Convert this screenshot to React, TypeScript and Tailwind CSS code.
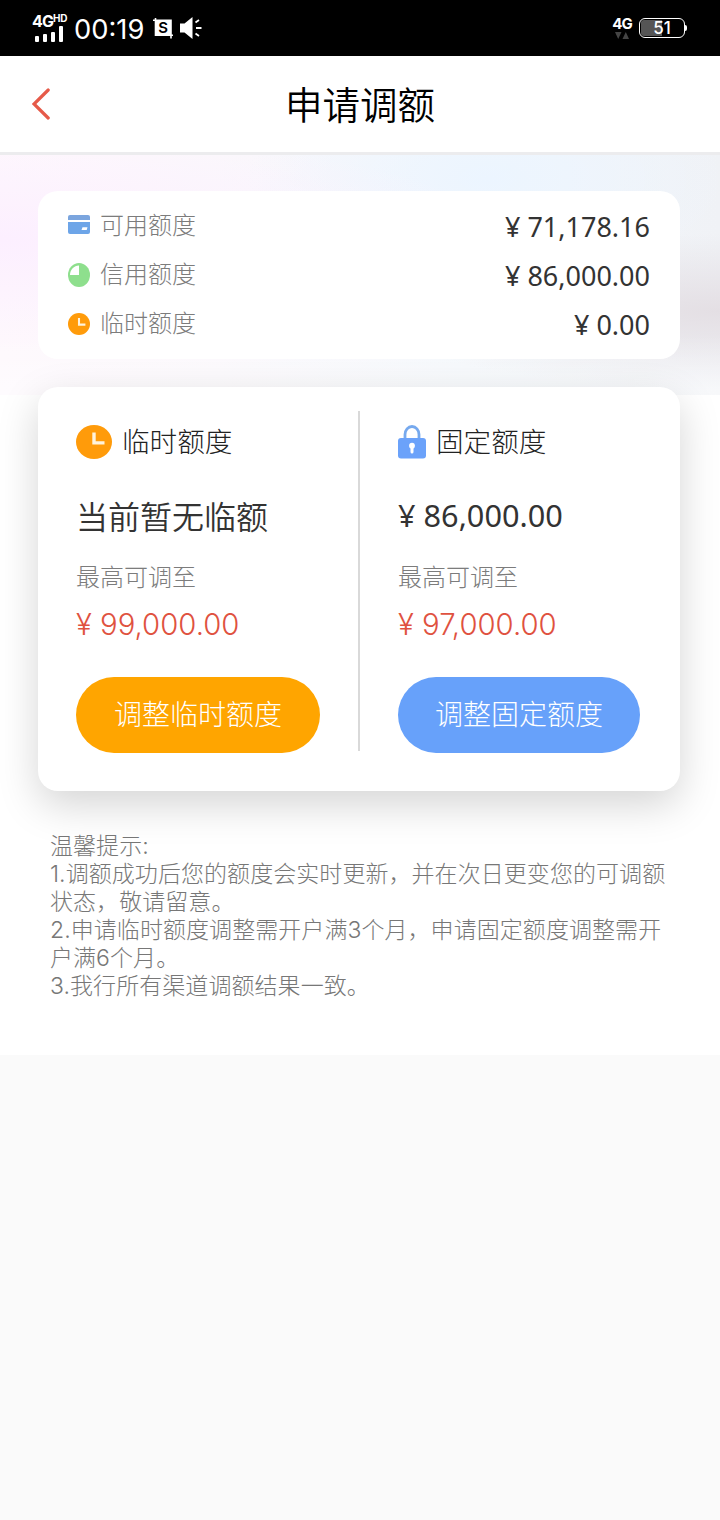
import React from 'react';

interface IconProps {
  className?: string;
}

const BankCardIcon: React.FC<IconProps> = ({ className }) => (
  <svg viewBox="0 0 22 19" className={className}>
    <path d="M2 0h18a2 2 0 0 1 2 2v3H0V2a2 2 0 0 1 2-2z" fill="#7ba5de" />
    <path d="M0 7h22v10a2 2 0 0 1-2 2H2a2 2 0 0 1-2-2z" fill="#6da5e8" />
    <path d="M14.5 12.3h5l-.8 2.6h-5.2z" fill="#fff" />
  </svg>
);

const PieIcon: React.FC<IconProps> = ({ className }) => (
  <svg viewBox="0 0 22 24" className={className}>
    <ellipse cx="11" cy="12" rx="11" ry="12" fill="#8edf8d" />
    <path d="M11 2.4V12H2C2 6.5 6 2.6 11 2.4z" fill="#fff" />
  </svg>
);

const ClockIcon: React.FC<IconProps> = ({ className }) => (
  <svg viewBox="0 0 36 36" preserveAspectRatio="none" className={className}>
    <circle cx="18" cy="18" r="18" fill="#ff9b0a" />
    <path d="M18 8v11h10.5" fill="none" stroke="#fff3dc" strokeWidth="3.4" />
  </svg>
);

const LockIcon: React.FC<IconProps> = ({ className }) => (
  <svg viewBox="0 0 28 34" className={className}>
    <path d="M7 14V9.5a7 8 0 0 1 14 0V14" fill="none" stroke="#76a9ee" strokeWidth="2.8" />
    <rect y="13" width="28" height="20.5" rx="3" fill="#6ba2fa" />
    <circle cx="14" cy="20.7" r="2.9" fill="#fff" />
    <path d="M12.5 21h3v6a1.5 1.5 0 0 1-3 0z" fill="#fff" />
  </svg>
);

const StatusBar = () => (
  <div className="flex h-14 items-center justify-between bg-black pl-8 pr-8 font-['Inter',sans-serif] text-white">
    <div className="flex items-center">
      <div className="w-[34px]">
        <div className="flex h-[15px] items-start text-[16px] font-bold leading-[15px] tracking-[-0.9px]">
          4G<span className="text-[10px] leading-[9px] tracking-[-0.3px]">HD</span>
        </div>
        <svg viewBox="0 0 34 17" className="-mt-1 h-[17px] w-[34px]" fill="#fff">
          <rect x="3" y="11" width="4" height="6" rx="1" />
          <rect x="11" y="9" width="4" height="8" rx="1" />
          <rect x="19" y="7" width="4" height="10" rx="1" />
          <rect x="27" y="1" width="4" height="16" rx="1" />
        </svg>
      </div>
      <span className="ml-2 mt-1 w-[72px] whitespace-nowrap text-[27.3px] leading-8">00:19</span>
      <svg viewBox="0 0 20 21" className="ml-[7px] h-[21px] w-5">
        <path d="M0 2.2h18V20.5M2.5 0v17.2H20" fill="none" stroke="#fff" strokeWidth="1.6" />
        <rect x="2.5" y="2" width="15.5" height="16" fill="#fff" />
        <text x="10.2" y="15.2" textAnchor="middle" fontSize="15" fontWeight="600" fill="#000">S</text>
      </svg>
      <svg viewBox="0 0 22 22" className="ml-[7px] h-[22px] w-[22px]">
        <path d="M0 6.5h4.5L12.5 0v22l-8-6.5H0z" fill="#fff" />
        <path d="M15.5 5.5L19 3M16 11h5.5M15.5 16.5L19 19" stroke="#fff" strokeWidth="1.8" />
      </svg>
    </div>
    <div className="flex items-center">
      <div className="-mt-0.5 flex flex-col items-center">
        <span className="text-[15px] font-bold leading-[15px] tracking-[-0.8px]">4G</span>
        <svg viewBox="0 0 14 7" className="mt-px h-[7px] w-3.5" fill="#444">
          <path d="M0 0h6.5L3.2 7zM7.5 7h6.5L10.8 0z" />
        </svg>
      </div>
      <div className="ml-[7px] flex h-5 w-[46px] items-center rounded-md border-[1.5px] border-white p-px">
        <div className="flex h-full w-full items-center justify-center rounded-[3px] bg-linear-to-r from-[#555] from-50% to-black to-50% text-[17px] font-medium leading-none">
          51
        </div>
      </div>
      <div className="mr-px h-1.5 w-[2px] rounded-r bg-white" />
    </div>
  </div>
);

const limits = [
  { label: '可用额度', amount: '71,178.16', icon: <BankCardIcon className="w-[22px]" /> },
  { label: '信用额度', amount: '86,000.00', icon: <PieIcon className="mt-0.5 w-[22px]" /> },
  { label: '临时额度', amount: '0.00', icon: <ClockIcon className="mt-0.5 size-[22px]" /> },
];

interface AdjustPanelProps {
  title: string;
  icon: React.ReactNode;
  current: React.ReactNode;
  max: string;
  action: string;
  buttonClass: string;
}

const AdjustPanel: React.FC<AdjustPanelProps> = ({ title, icon, current, max, action, buttonClass }) => (
  <div>
    <div className="flex h-9 items-center gap-2.5 text-[27.6px] font-light text-[#222]">
      {icon}
      <span className="-mt-1 leading-9">{title}</span>
    </div>
    <div className="mt-8 h-12 text-[#333]">{current}</div>
    <div className="mt-[18px] text-[24px] font-light leading-9 text-[#7c7c7c]">最高可调至</div>
    <div className="mt-[13px] whitespace-pre font-['Inter',sans-serif] text-[29.3px] font-light leading-9 text-[#df523f]">¥ {max}</div>
    <button className={`mt-[34px] h-[76px] rounded-full pb-1 text-[28px] font-light text-white ${buttonClass}`}>{action}</button>
  </div>
);

const tips = [
  '温馨提示:',
  '1.调额成功后您的额度会实时更新，并在次日更变您的可调额',
  '状态，敬请留意。',
  '2.申请临时额度调整需开户满3个月，申请固定额度调整需开',
  '户满6个月。',
  '3.我行所有渠道调额结果一致。',
];

const App = () => (
  <div className="h-[1520px] w-[720px] overflow-hidden bg-[#fafafa] font-['Noto_Sans_CJK_SC',sans-serif]">
    <StatusBar />
    <header className="flex h-[99px] items-center border-b-[3px] border-[#ececee] bg-white pl-8">
      <svg viewBox="0 0 18 32" className="h-8 w-[18px]" fill="none" stroke="#e65a49" strokeWidth="3.2" strokeLinecap="round">
        <path d="M16.2 2L2 16l14.2 14" />
      </svg>
      <h1 className="ml-[235px] pb-0.5 text-[37.5px] font-[350] leading-[52px] text-black">申请调额</h1>
    </header>

    <main className="h-[900px] bg-white">
      <div className="h-60 bg-[linear-gradient(180deg,transparent_75%,rgba(255,255,255,0.5)_100%),radial-gradient(ellipse_at_0%_35%,#fcefff_0%,transparent_50%),radial-gradient(ellipse_at_68%_10%,#ecf5ff_0%,transparent_35%),radial-gradient(ellipse_at_100%_65%,#e4dfe4_0%,transparent_35%),linear-gradient(90deg,#fef8fd,#fbf8fc_30%,#f3f7fb_65%,#f0f2f6)] px-[38px] pt-9">
        <section className="h-[168px] w-[642px] rounded-[20px] bg-white pl-[30px] pr-[30px] pt-[9px]">
          {limits.map(({ label, amount, icon }) => (
            <div key={label} className="flex h-[49px] items-center justify-between">
              <div className="flex items-center gap-2.5 text-[24px] font-light leading-9 text-[#7c7c7c]">
                {icon}
                <span className="-mt-0.5">{label}</span>
              </div>
              <span className="whitespace-pre pt-1 font-['Noto_Sans',sans-serif] text-[27px] leading-9 text-[#333]">¥ {amount}</span>
            </div>
          ))}
        </section>
      </div>

      <section className="relative mx-[38px] -mt-2 flex h-[404px] w-[642px] rounded-[20px] bg-white pl-[38px] pt-6 shadow-[0_14px_40px_rgba(0,0,0,0.17)]">
        <div className="w-[282px] pt-[13px]">
          <AdjustPanel
            title="临时额度"
            icon={<ClockIcon className="h-[34px] w-9" />}
            current={<span className="text-[32px] font-[350] leading-[46px]">当前暂无临额</span>}
            max="99,000.00"
            action="调整临时额度"
            buttonClass="w-[244px] bg-[#ffa500]"
          />
        </div>
        <div className="h-[340px] w-0.5 bg-[#d9d9d9]" />
        <div className="pl-[38px] pt-[13px]">
          <AdjustPanel
            title="固定额度"
            icon={<LockIcon className="w-7" />}
            current={<span className="whitespace-pre font-['Noto_Sans',sans-serif] text-[30.7px] leading-[46px]">¥ 86,000.00</span>}
            max="97,000.00"
            action="调整固定额度"
            buttonClass="w-[242px] bg-[#67a1fa]"
          />
        </div>
      </section>

      <div className="mt-[41px] pl-[50px] font-['Inter','Noto_Sans_CJK_SC',sans-serif] text-[23px] font-light leading-7 tracking-[0.06px] text-[#777]">
        {tips.map(line => (
          <p key={line} className="whitespace-nowrap">{line}</p>
        ))}
      </div>
    </main>
  </div>
);

export default App;
